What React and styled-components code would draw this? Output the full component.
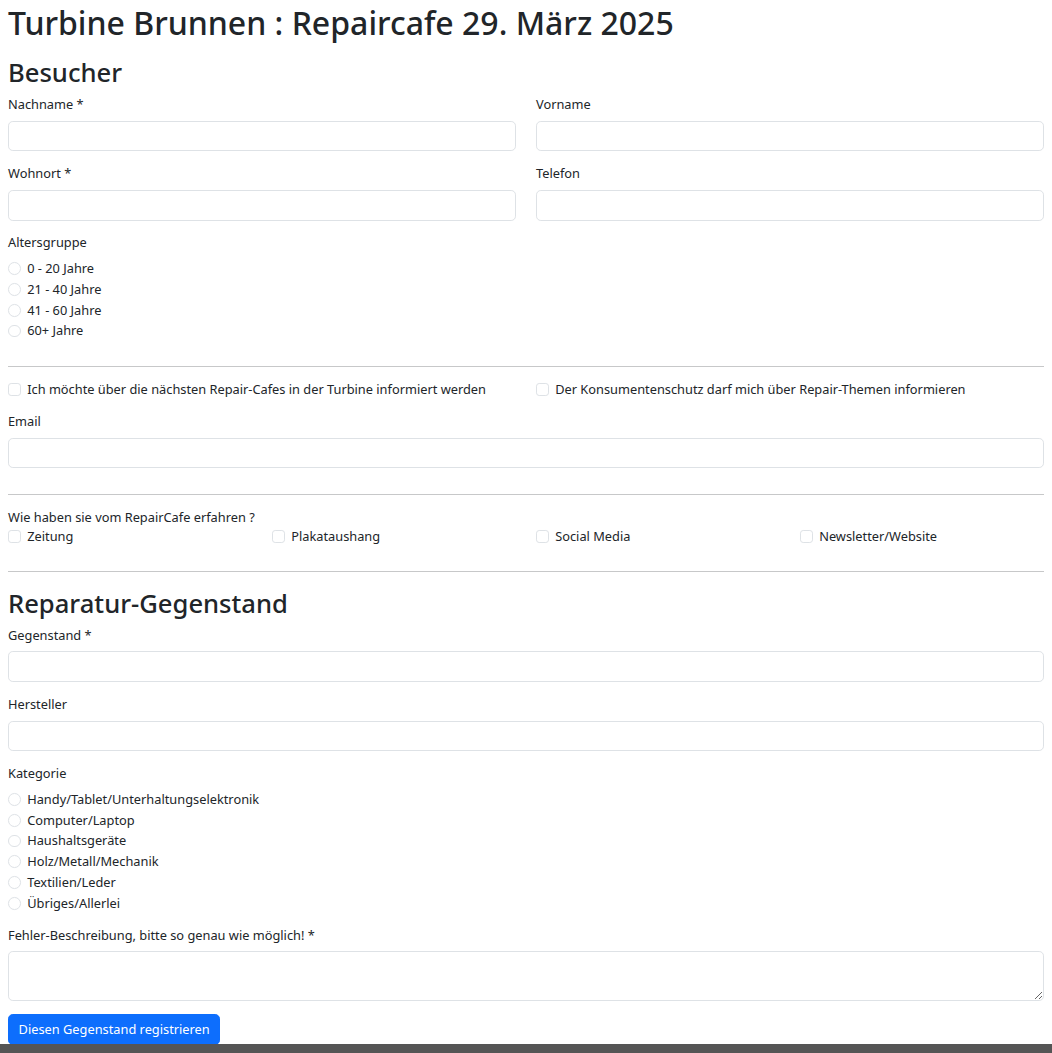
import React from 'react';
import styled, { createGlobalStyle } from 'styled-components';

const GlobalStyle = createGlobalStyle`
    html {
        font-size: 12.8px;
    }
    body {
        margin: 0;
        background: #ffffff;
        color: #212529;
        font-family: "Noto Sans", "Liberation Sans", sans-serif;
        font-size: 12.8px;
        line-height: 1.5;
    }
    * {
        box-sizing: border-box;
    }
`;

const ageGroups = ['0 - 20 Jahre', '21 - 40 Jahre', '41 - 60 Jahre', '60+ Jahre'];
const sources = ['Zeitung', 'Plakataushang', 'Social Media', 'Newsletter/Website'];
const categories = [
    'Handy/Tablet/Unterhaltungselektronik',
    'Computer/Laptop',
    'Haushaltsgeräte',
    'Holz/Metall/Mechanik',
    'Textilien/Leder',
    'Übriges/Allerlei',
];

const App = () => {
    return (
        <>
            <GlobalStyle />
            <Page>
                <Title>Turbine Brunnen : Repaircafe 29. März 2025</Title>
                <Form onSubmit={(e) => e.preventDefault()}>
                    <SectionTitle>Besucher</SectionTitle>
                    <Grid $cols={2}>
                        <Field>
                            <Label>Nachname *</Label>
                            <Input type="text" />
                        </Field>
                        <Field>
                            <Label>Vorname</Label>
                            <Input type="text" />
                        </Field>
                        <Field>
                            <Label>Wohnort *</Label>
                            <Input type="text" />
                        </Field>
                        <Field>
                            <Label>Telefon</Label>
                            <Input type="tel" />
                        </Field>
                    </Grid>

                    <Field>
                        <Label>Altersgruppe</Label>
                        {ageGroups.map((age) => (
                            <Choice key={age}>
                                <Mark type="radio" name="age" $round />
                                <span>{age}</span>
                            </Choice>
                        ))}
                    </Field>

                    <Rule />

                    <Grid $cols={2}>
                        <Field>
                            <Choice>
                                <Mark type="checkbox" />
                                <span>Ich möchte über die nächsten Repair-Cafes in der Turbine informiert werden</span>
                            </Choice>
                        </Field>
                        <Field>
                            <Choice>
                                <Mark type="checkbox" />
                                <span>Der Konsumentenschutz darf mich über Repair-Themen informieren</span>
                            </Choice>
                        </Field>
                    </Grid>
                    <Field>
                        <Label>Email</Label>
                        <Input type="email" />
                    </Field>

                    <Rule />

                    <Field $gap="10.6px">
                        <Label $noGap>Wie haben sie vom RepairCafe erfahren ?</Label>
                        <Grid $cols={4}>
                            {sources.map((source) => (
                                <Choice key={source}>
                                    <Mark type="checkbox" />
                                    <span>{source}</span>
                                </Choice>
                            ))}
                        </Grid>
                    </Field>

                    <Rule />

                    <SectionTitle $spaced>Reparatur-Gegenstand</SectionTitle>
                    <Field>
                        <Label>Gegenstand *</Label>
                        <Input type="text" />
                    </Field>
                    <Field>
                        <Label>Hersteller</Label>
                        <Input type="text" />
                    </Field>
                    <Field>
                        <Label>Kategorie</Label>
                        {categories.map((cat) => (
                            <Choice key={cat}>
                                <Mark type="radio" name="category" $round />
                                <span>{cat}</span>
                            </Choice>
                        ))}
                    </Field>
                    <Field>
                        <Label>Fehler-Beschreibung, bitte so genau wie möglich! *</Label>
                        <TextArea rows={2} />
                    </Field>
                    <Actions>
                        <Button type="submit">Diesen Gegenstand registrieren</Button>
                    </Actions>
                </Form>
            </Page>
            <Footer />
        </>
    );
};

export default App;

const Page = styled.main`
    padding: 4px 8px 40px;
`;

const Title = styled.h1`
    margin: 0 0 15.6px;
    font-size: 32px;
    font-weight: 500;
    line-height: 1.2;
`;

const Form = styled.form`
    display: flex;
    flex-direction: column;
`;

const SectionTitle = styled.h2`
    margin: ${(p) => (p.$spaced ? '3.8px' : '0')} 0 6.4px;
    font-size: 25.6px;
    font-weight: 500;
    line-height: 1.2;
`;

const Grid = styled.div`
    display: grid;
    grid-template-columns: repeat(${(p) => p.$cols}, 1fr);
    column-gap: 20px;
`;

const Field = styled.div`
    margin-bottom: ${(p) => p.$gap || '12.8px'};
`;

const Label = styled.label`
    display: block;
    margin-bottom: ${(p) => (p.$noGap ? '0' : '6.4px')};
    line-height: 19.2px;
`;

const Input = styled.input`
    display: block;
    width: 100%;
    height: 30.8px;
    padding: 4.8px 9.6px;
    border: 1px solid #dee2e6;
    border-radius: 4.8px;
    background: #ffffff;
    color: #212529;
    font: inherit;
    outline: none;
`;

const TextArea = styled.textarea`
    display: block;
    width: 100%;
    height: 50px;
    padding: 4.8px 9.6px;
    border: 1px solid #dee2e6;
    border-radius: 4.8px;
    background: #ffffff;
    color: #212529;
    font: inherit;
    resize: vertical;
    outline: none;
`;

const Choice = styled.label`
    display: flex;
    align-items: flex-start;
    gap: 6.4px;
    min-height: 19.2px;
    line-height: 19.2px;
    margin-bottom: 1.6px;

    &:last-child {
        margin-bottom: 0;
    }
`;

const Mark = styled.input`
    appearance: none;
    flex: 0 0 12.8px;
    width: 12.8px;
    height: 12.8px;
    margin: 3.2px 0 0;
    border: 1px solid #dee2e6;
    border-radius: ${(p) => (p.$round ? '50%' : '3.2px')};
    background: #ffffff;

    &:checked {
        background: #0d6efd;
        border-color: #0d6efd;
    }
`;

const Rule = styled.hr`
    width: 100%;
    margin: 12.8px 0;
    border: 0;
    border-top: 1px solid #212529;
    opacity: 0.25;
`;

const Actions = styled.div`
    display: flex;
`;

const Button = styled.button`
    padding: 4.8px 9.6px;
    border: 1px solid #0d6efd;
    border-radius: 4.8px;
    background: #0d6efd;
    color: #ffffff;
    font: inherit;
    line-height: 19.2px;
    cursor: pointer;
`;

const Footer = styled.footer`
    position: fixed;
    left: 0;
    right: 0;
    bottom: 0;
    height: 9px;
    background: #555555;
`;
